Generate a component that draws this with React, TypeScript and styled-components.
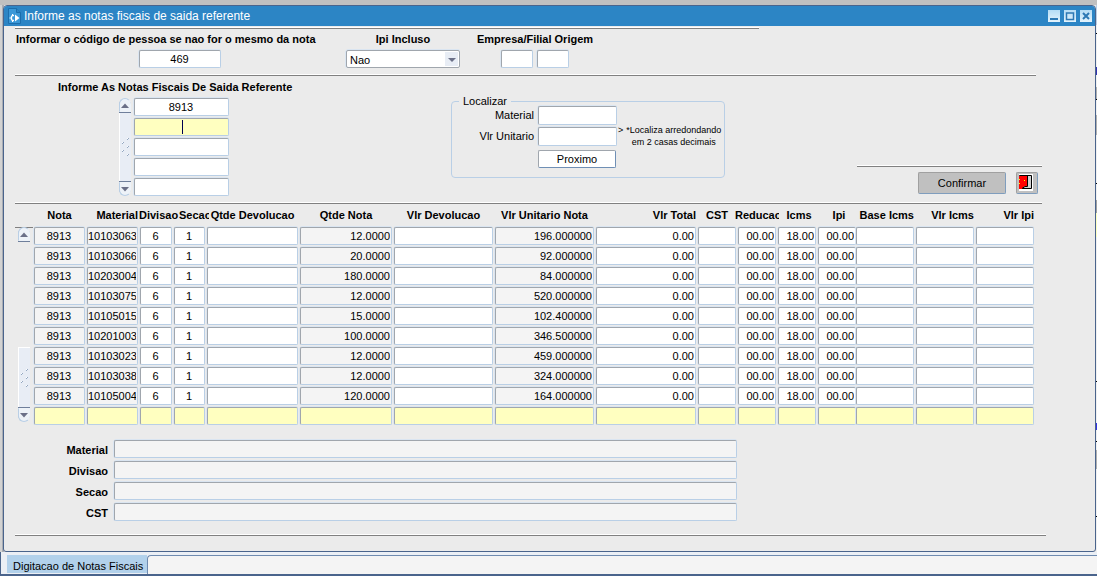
import React, { useState } from "react";
import styled, { createGlobalStyle, css } from "styled-components";

const color = {
  panel: "#ebebeb",
  frame: "#4a648c",
  title: "#2c85c5",
  line: "#808080",
  fieldTop: "#a0a6ad",
  fieldEdge: "#b9cfe6",
  halo: "#dae5f1",
  active: "#ffffc0",
  readOnly: "#f4f4f4",
  ink: "#000000",
};

const GlobalStyle = createGlobalStyle`
  *, *::before, *::after { box-sizing: border-box; }
  body {
    margin: 0;
    background: #c0c0c0;
    color: ${color.ink};
    font: 11px/14px "Liberation Sans", Arial, sans-serif;
  }
  button, input, select { font: inherit; color: inherit; margin: 0; }
`;

const Desktop = styled.div`
  display: flex;
  flex-direction: column;
  min-height: 100vh;
`;

const Stage = styled.div`
  display: flex;
  padding: 5px 0 0 2px;
  background: linear-gradient(#c0c0c0 5px, transparent 5px),
    linear-gradient(90deg, #d2d2d2 2px, #a9adb3 2px 4px, #e8e8e8 4px);
`;

const Behind = styled.div`
  width: 1px;
  background: linear-gradient(
    #b9cfe6 20px, #f0f0f0 20px 28px, #000 28px 29px, #f0f0f0 29px 62px,
    #3333b0 62px 70px, #f0f0f0 70px 82px, #b0b0b0 82px 94px, #000 94px 95px,
    #f0f0f0 95px 110px, #b0b0b0 110px 130px, #f0f0f0 130px 178px,
    #000 178px 179px, #f0f0f0 179px 195px, #a0a0a0 195px 208px,
    #ffffc0 208px 232px, #f0f0f0 232px 376px, #000 376px 377px,
    #f0f0f0 377px 418px, #3333e0 418px 425px, #f0f0f0 425px 436px,
    #000 436px 437px, #f0f0f0 437px 445px, #b0b0b0 445px 464px,
    #f0f0f0 464px 511px, #000 511px 512px, #f0f0f0 512px
  );
`;

const Frame = styled.main`
  flex: 1;
  min-width: 0;
  margin-left: 1px;
  border: 1px solid ${color.frame};
  border-radius: 4px 4px 3px 3px;
  background: ${color.panel};
  overflow: hidden;
`;

const TitleBar = styled.header`
  display: flex;
  align-items: center;
  height: 20px;
  padding: 0 3px 0 4px;
  background: ${color.title};
`;

const Title = styled.h1`
  flex: 1;
  margin: 0 0 0 3px;
  font-size: 12px;
  font-weight: 400;
  line-height: 20px;
  color: #fff;
`;

const WindowButtons = styled.div`
  display: flex;
  gap: 4px;
`;

const WindowButton = styled.button`
  width: 12px;
  height: 12px;
  padding: 0;
  border: 0;
  background: linear-gradient(#b4dcf5, #e4f3fc);
  svg { display: block; }
`;

const Body = styled.div`
  padding: 1px 0 15px 11px;
`;

const Rule = styled.hr<{ $right?: number }>`
  height: 2px;
  margin: 0 ${(p) => p.$right ?? 0}px 0 0;
  border: 0;
  border-top: 1px solid #fff;
  border-bottom: 1px solid ${color.line};
`;

const fieldLook = css`
  height: 18px;
  border: 1px solid ${color.fieldEdge};
  border-top-color: ${color.fieldTop};
  border-left-color: ${color.fieldTop};
  border-radius: 2px;
  box-shadow: 0 -1px 0 ${color.halo}, -1px 0 0 ${color.halo};
  background: #fff;
  outline: 0;
`;

type Align = "left" | "center" | "right";

const Field = styled.input<{ $w?: number; $align?: Align; $active?: boolean; $tall?: boolean }>`
  ${fieldLook}
  display: block;
  width: ${(p) => (p.$w ? `${p.$w}px` : "100%")};
  padding: 0 1px 0 0;
  text-align: ${(p) => p.$align ?? "left"};
  ${(p) => p.$tall && "height: 19px;"}
  ${(p) => p.readOnly && `background: ${color.readOnly};`}
  ${(p) => p.$active && `background: ${color.active};`}
`;

const Caption = styled.label`
  font-weight: 700;
  white-space: nowrap;
`;

const Criteria = styled.div`
  display: flex;
  gap: 2px;
  padding: 3px 0 6px 1px;
`;

const Group = styled.div<{ $w: number; $start?: boolean }>`
  display: flex;
  flex-direction: column;
  align-items: center;
  gap: 4px;
  width: ${(p) => p.$w}px;
  ${(p) => p.$start && "> label { align-self: flex-start; }"}
`;

const Pair = styled.div`
  display: flex;
  gap: 4px;
`;

const SelectBox = styled.div`
  position: relative;
  width: 114px;
  svg { position: absolute; top: 2px; right: 2px; pointer-events: none; }
`;

const Select = styled.select`
  ${fieldLook}
  display: block;
  width: 100%;
  padding: 1px 16px 0 3px;
  border-right-color: ${color.fieldTop};
  border-bottom-color: ${color.fieldTop};
  appearance: none;
`;

const Middle = styled.div`
  display: flex;
  padding-right: 53px;
`;

const Invoices = styled.section`
  width: 436px;
  padding: 4px 0 6px 43px;
`;

const InvoiceTitle = styled.h2`
  margin: 0 0 4px;
  font-size: 11px;
  line-height: 14px;
`;

const InvoiceBody = styled.div`
  display: flex;
  gap: 3px;
  padding-left: 61px;
`;

const InvoiceList = styled.div`
  display: flex;
  flex-direction: column;
  gap: 2px;
  width: 95px;
`;

const CaretHolder = styled.div`
  position: relative;
`;

const Caret = styled.span`
  position: absolute;
  top: 2px;
  left: 50%;
  width: 1px;
  height: 14px;
  background: #000050;
`;

const ScrollBar = styled.div`
  display: flex;
  flex-direction: column;
  width: 12px;
`;

const ScrollArrow = styled.button<{ $down?: boolean }>`
  height: 14px;
  padding: 0;
  border: 1px solid ${color.fieldEdge};
  border-right-color: #edf2f8;
  border-radius: ${(p) => (p.$down ? "0 0 7px 7px" : "7px 7px 0 0")};
  background: #edf2f8;
  box-shadow: 0 ${(p) => (p.$down ? "-1px" : "1px")} 0 #6f7f9b;
  border-${(p) => (p.$down ? "top" : "bottom")}-color: #edf2f8;
  svg { display: block; margin: 0 auto; }
`;

const Thumb = styled.div<{ $h?: number }>`
  display: flex;
  align-items: center;
  justify-content: center;
  margin: 1px 0;
  border-left: 1px solid #fff;
  background: #e8edf5;
  ${(p) => (p.$h ? `height: ${p.$h}px; margin-top: auto; border-top: 1px solid #fff;` : "flex: 1;")}
`;

const Locate = styled.fieldset`
  display: grid;
  grid-template-columns: 82px 79px 106px;
  column-gap: 4px;
  row-gap: 2px;
  align-self: flex-start;
  width: 274px;
  min-width: 0;
  margin: 20px 0 0;
  padding: 0 0 9px;
  border: 1px solid ${color.fieldEdge};
  border-radius: 4px;
`;

const Legend = styled.legend`
  margin-left: 7px;
  padding: 0 4px;
  line-height: 10px;
`;

const LocateLabel = styled.label`
  text-align: right;
  line-height: 19px;
`;

const Hint = styled.div`
  display: flex;
  grid-column: 3;
  grid-row: 1 / 4;
  gap: 3px;
  margin-left: -3px;
  padding-top: 18px;
  font-size: 9px;
  line-height: 12px;
  text-align: center;
  white-space: nowrap;
`;

const NextButton = styled.button`
  grid-column: 2;
  height: 18px;
  margin: 2px 1px 0 0;
  padding: 0;
  border: 1px solid #6f8fb5;
  border-top-color: ${color.fieldTop};
  border-left-color: ${color.fieldTop};
  border-radius: 2px;
  background: #fff;
`;

const Actions = styled.div`
  align-self: flex-end;
  width: 185px;
  margin-left: auto;
  padding-bottom: 8px;
`;

const ActionRow = styled.div`
  display: flex;
  justify-content: flex-end;
  gap: 10px;
  padding: 5px 4px 0 0;
`;

const ActionButton = styled.button<{ $w: number }>`
  width: ${(p) => p.$w}px;
  height: 22px;
  padding: 0;
  border: 1px solid #7f9dbd;
  border-top-color: #a0a0a0;
  border-left-color: #a0a0a0;
  border-radius: 2px;
  background: #c0c0c0;
  svg { display: block; margin: 0 auto 2px 2px; }
`;

const GridArea = styled.div`
  display: flex;
  padding-right: 59px;
`;

const GridScroll = styled.div`
  display: flex;
  flex: none;
  width: 19px;
  margin: 23px 0 5px;
  padding-left: 3px;
  background: linear-gradient(${color.line}, ${color.line}) 0 0 / 18px 1px no-repeat;
`;

const Table = styled.table`
  flex: 1;
  width: 100%;
  min-width: 0;
  border-collapse: collapse;
  table-layout: fixed;
`;

const HeadCell = styled.th<{ $align: Align }>`
  height: 23px;
  padding: 0 2px 0 0;
  line-height: 22px;
  text-align: ${(p) => p.$align};
  vertical-align: top;
  white-space: nowrap;
`;

const HeadText = styled.div<{ $shift: number; $clip?: number }>`
  margin-left: ${(p) => p.$shift}px;
  ${(p) => p.$clip && `width: ${p.$clip}px; overflow: hidden;`}
`;

const Cell = styled.td<{ $tight?: boolean }>`
  height: 20px;
  padding: 0 ${(p) => (p.$tight ? 0 : 2)}px 0 0;
  vertical-align: top;
`;

const Details = styled.div`
  display: grid;
  grid-template-columns: 93px 1fr;
  gap: 3px 6px;
  padding: 13px 358px 13px 0;
`;

const DetailLabel = styled(Caption)`
  text-align: right;
  line-height: 20px;
  height: 18px;
`;

const TabStrip = styled.nav`
  display: flex;
  flex: 1;
  height: 24px;
  padding: 3px 0 0 6px;
  border-left: 1px solid ${color.frame};
  border-bottom: 2px solid ${color.frame};
  background: #ebeff5;
`;

const Tab = styled.button`
  height: 18px;
  padding: 3px 4px 0 6px;
  border: 0;
  background: #b2d1eb;
  line-height: 14px;
  white-space: nowrap;
`;

const TabRest = styled.div`
  flex: 1;
  border: 1px solid #6f8bb0;
  border-width: 1px 0 0 1px;
  border-radius: 4px 0 0 0;
  background: #f4f4f4;
`;

const TriangleIcon = ({ down }: { down?: boolean }) => (
  <svg width="8" height="5" viewBox="0 0 8 5" aria-hidden="true">
    <path d={down ? "M0 0h8L4 4.5z" : "M0 5h8L4 .5z"} fill="#6b7088" />
  </svg>
);

const GripIcon = () => (
  <svg width="10" height="20" viewBox="0 0 10 20" aria-hidden="true">
    {[[7, 2], [2, 6], [7, 10], [2, 14], [7, 18]].map(([x, y]) => (
      <g key={`${x}-${y}`}>
        <rect x={x - 1} y={y - 1} width="1" height="1" fill="#fff" />
        <path d={`M${x - 1} ${y + 1}l2-2`} stroke="#93a7c1" />
      </g>
    ))}
  </svg>
);

const AppIcon = () => (
  <svg width="13" height="16" viewBox="0 0 13 16" aria-hidden="true">
    <path d="M.5.5h8l4 4v11H.5z" fill="#3a98d8" stroke="#1c6eac" />
    <path d="M8.5.5v4h4" fill="#2c85c5" stroke="#1c6eac" />
    <path d="M6 7.500H4.500L3.500 8.500v3l1 1H6" fill="none" stroke="#fff" strokeWidth="1.300" />
    <path d="M1.500 10h2M4.500 6v1.500M4.500 12.500V14" stroke="#fff" />
    <path d="M7 6.500l4.500 3.500L7 13.500z" fill="#fff" />
  </svg>
);

const DoorIcon = () => (
  <svg width="14" height="17" viewBox="0 0 14 17" aria-hidden="true">
    <path d="M0 0h14v17H0z" fill="#fff" />
    <path d="M.5 1.500h12v13H.5z" fill="#d0d0d0" stroke="#000" />
    <path d="M0 2h8v10H6l-2 2-1 1H0z" fill="#f00" />
    <path d="M8.500 2v10.500H6L3 14.500" fill="none" stroke="#000" />
    <path d="M0 5h1v1H0zM0 9h1v1H0zM5 6h1v1H5z" fill="#ff0" />
  </svg>
);

const windowIcons: [string, string][] = [
  ["Minimizar", "M2 9h8"],
  ["Maximizar", "M2.500 3h7v6.500h-7z"],
  ["Fechar", "M3 3l6 6M9 3l-6 6"],
];

interface Column {
  name: string;
  width: number;
  head: Align;
  align: Align;
  readOnly?: boolean;
  shift?: number;
  clip?: number;
}

const columns: Column[] = [
  { name: "Nota", width: 53, head: "center", align: "center", readOnly: true },
  { name: "Material", width: 53, head: "right", align: "right", readOnly: true },
  { name: "Divisao", width: 34, head: "left", align: "center", shift: -1 },
  { name: "Secao", width: 33, head: "left", align: "center", shift: 5, clip: 30 },
  { name: "Qtde Devolucao", width: 93, head: "center", align: "right" },
  { name: "Qtde Nota", width: 94, head: "center", align: "right", readOnly: true },
  { name: "Vlr Devolucao", width: 101, head: "center", align: "right" },
  { name: "Vlr Unitario Nota", width: 101, head: "center", align: "right", readOnly: true },
  { name: "Vlr Total", width: 102, head: "right", align: "right" },
  { name: "CST", width: 40, head: "center", align: "right" },
  { name: "Reducao", width: 40, head: "left", align: "right", shift: -3, clip: 44 },
  { name: "Icms", width: 40, head: "center", align: "right", shift: 4 },
  { name: "Ipi", width: 38, head: "center", align: "right", shift: 6 },
  { name: "Base Icms", width: 60, head: "right", align: "right" },
  { name: "Vlr Icms", width: 60, head: "right", align: "right" },
  { name: "Vlr Ipi", width: 60, head: "right", align: "right" },
];

const items: [string, string, string][] = [
  ["10103063", "12.0000", "196.000000"],
  ["10103066", "20.0000", "92.000000"],
  ["10203004", "180.0000", "84.000000"],
  ["10103075", "12.0000", "520.000000"],
  ["10105015", "15.0000", "102.400000"],
  ["10201003", "100.0000", "346.500000"],
  ["10103023", "12.0000", "459.000000"],
  ["10103038", "12.0000", "324.000000"],
  ["10105004", "120.0000", "164.000000"],
];

const rows: string[][] = [
  ...items.map(([material, qty, price]) => [
    "8913", material, "6", "1", "", qty, "", price, "0.00", "", "00.00", "18.00", "00.00", "", "", "",
  ]),
  columns.map(() => ""),
];

const Scroller = ({ thumb }: { thumb?: number }) => (
  <ScrollBar>
    <ScrollArrow aria-label="Rolar para cima"><TriangleIcon /></ScrollArrow>
    <Thumb $h={thumb}><GripIcon /></Thumb>
    <ScrollArrow $down aria-label="Rolar para baixo"><TriangleIcon down /></ScrollArrow>
  </ScrollBar>
);

export default function App() {
  const [included, setIncluded] = useState("Nao");

  return (
    <>
      <GlobalStyle />
      <Desktop>
        <Stage>
          <Frame>
            <TitleBar>
              <AppIcon />
              <Title>Informe as notas fiscais de saida referente</Title>
              <WindowButtons>
                {windowIcons.map(([label, d]) => (
                  <WindowButton key={label} aria-label={label}>
                    <svg width="12" height="12" viewBox="0 0 12 12" aria-hidden="true">
                      <path d={d} fill="none" stroke="#2c78b4" strokeWidth={label === "Maximizar" ? 1.5 : 2} />
                    </svg>
                  </WindowButton>
                ))}
              </WindowButtons>
            </TitleBar>

            <Body>
              <Rule $right={336} />
              <Criteria>
                <Group $w={328} $start>
                  <Caption htmlFor="pessoa">Informar o código de pessoa se nao for o mesmo da nota</Caption>
                  <Field id="pessoa" $w={82} $align="center" defaultValue="469" />
                </Group>
                <Group $w={114}>
                  <Caption htmlFor="ipi">Ipi Incluso</Caption>
                  <SelectBox>
                    <Select id="ipi" value={included} onChange={(e) => setIncluded(e.target.value)}>
                      <option>Nao</option>
                      <option>Sim</option>
                    </Select>
                    <svg width="13" height="14" viewBox="0 0 13 14" aria-hidden="true">
                      <path d="M0 0h13v14H0z" fill="#e8edf5" />
                      <path d="M3 6h8L7 10z" fill="#6b7088" />
                    </svg>
                  </SelectBox>
                </Group>
                <Group $w={146}>
                  <Caption htmlFor="empresa">Empresa/Filial Origem</Caption>
                  <Pair>
                    <Field id="empresa" $w={32} />
                    <Field aria-label="Filial Origem" $w={32} />
                  </Pair>
                </Group>
              </Criteria>

              <Rule $right={59} />
              <Middle>
                <Invoices>
                  <InvoiceTitle>Informe As Notas Fiscais De Saida Referente</InvoiceTitle>
                  <InvoiceBody>
                    <Scroller />
                    <InvoiceList>
                      <Field aria-label="Nota 1" $align="center" defaultValue="8913" />
                      <CaretHolder>
                        <Field aria-label="Nota 2" $align="center" $active />
                        <Caret />
                      </CaretHolder>
                      <Field aria-label="Nota 3" $align="center" />
                      <Field aria-label="Nota 4" $align="center" />
                      <Field aria-label="Nota 5" $align="center" />
                    </InvoiceList>
                  </InvoiceBody>
                </Invoices>

                <Locate>
                  <Legend>Localizar</Legend>
                  <LocateLabel htmlFor="loc-material">Material</LocateLabel>
                  <Field id="loc-material" $tall />
                  <LocateLabel htmlFor="loc-valor">Vlr Unitario</LocateLabel>
                  <Field id="loc-valor" $tall />
                  <NextButton>Proximo</NextButton>
                  <Hint>
                    <span>&gt;</span>
                    <span>*Localiza arredondando<br />em 2 casas decimais</span>
                  </Hint>
                </Locate>

                <Actions>
                  <Rule />
                  <ActionRow>
                    <ActionButton $w={88}>Confirmar</ActionButton>
                    <ActionButton $w={22} aria-label="Sair"><DoorIcon /></ActionButton>
                  </ActionRow>
                </Actions>
              </Middle>

              <Rule $right={53} />
              <GridArea>
                <GridScroll><Scroller thumb={60} /></GridScroll>
                <Table>
                  <colgroup>
                    {columns.map((c) => <col key={c.name} width={c.width} />)}
                  </colgroup>
                  <thead>
                    <tr>
                      {columns.map((c) => (
                        <HeadCell key={c.name} $align={c.head}>
                          <HeadText $shift={c.shift ?? 0} $clip={c.clip}>{c.name}</HeadText>
                        </HeadCell>
                      ))}
                    </tr>
                  </thead>
                  <tbody>
                    {rows.map((row, r) => (
                      <tr key={r}>
                        {columns.map((c, i) => (
                          <Cell key={c.name} $tight={c.name === "Ipi"}>
                            <Field
                              aria-label={`${c.name} ${r + 1}`}
                              $align={c.align}
                              $active={r === rows.length - 1}
                              readOnly={c.readOnly}
                              defaultValue={row[i]}
                            />
                          </Cell>
                        ))}
                      </tr>
                    ))}
                  </tbody>
                </Table>
              </GridArea>

              <Details>
                {["Material", "Divisao", "Secao", "CST"].map((name) => (
                  <React.Fragment key={name}>
                    <DetailLabel htmlFor={`det-${name}`}>{name}</DetailLabel>
                    <Field id={`det-${name}`} readOnly />
                  </React.Fragment>
                ))}
              </Details>
              <Rule $right={49} />
            </Body>
          </Frame>
          <Behind />
        </Stage>

        <TabStrip>
          <Tab>Digitacao de Notas Fiscais</Tab>
          <TabRest />
        </TabStrip>
      </Desktop>
    </>
  );
}
